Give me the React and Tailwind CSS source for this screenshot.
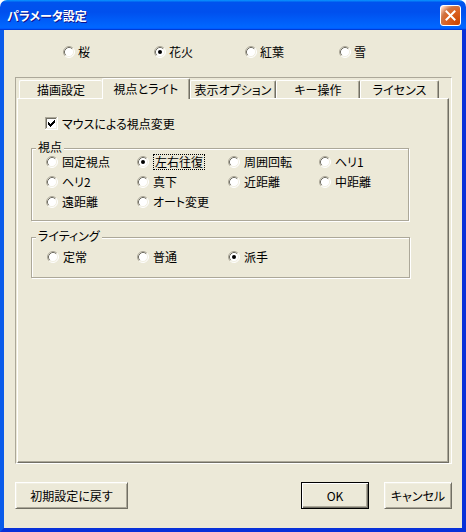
import React from "react";

function Radio({ checked }) {
  return (
    <svg width="12" height="12" viewBox="0 0 12 12" className="shrink-0 block">
      <circle cx="6" cy="6" r="5" fill="#fff" />
      <path d="M2.11 9.89 A5.5 5.5 0 0 1 9.89 2.11" fill="none" stroke="#aca899" />
      <path d="M9.89 2.11 A5.5 5.5 0 0 1 2.11 9.89" fill="none" stroke="#ffffff" />
      <path d="M2.82 9.18 A4.5 4.5 0 0 1 9.18 2.82" fill="none" stroke="#716f64" />
      <path d="M9.18 2.82 A4.5 4.5 0 0 1 2.82 9.18" fill="none" stroke="#f1efe2" />
      {checked && <circle cx="6" cy="6" r="2" fill="#000" />}
    </svg>
  );
}

function CheckBox() {
  return (
    <svg width="13" height="13" viewBox="0 0 13 13" className="shrink-0 block" shapeRendering="crispEdges">
      <rect x="0" y="0" width="13" height="13" fill="#ffffff" />
      <rect x="0" y="0" width="12" height="12" fill="#aca899" />
      <rect x="1" y="1" width="11" height="11" fill="#f1efe2" />
      <rect x="1" y="1" width="10" height="10" fill="#716f64" />
      <rect x="2" y="2" width="9" height="9" fill="#ffffff" />
      <rect x="3" y="5" width="1" height="3" fill="#000" />
      <rect x="4" y="6" width="1" height="3" fill="#000" />
      <rect x="5" y="7" width="1" height="3" fill="#000" />
      <rect x="6" y="6" width="1" height="3" fill="#000" />
      <rect x="7" y="5" width="1" height="3" fill="#000" />
      <rect x="8" y="4" width="1" height="3" fill="#000" />
      <rect x="9" y="3" width="1" height="3" fill="#000" />
    </svg>
  );
}

function RadioItem({ label, checked, gap = "gap-[4px]", focus = false }) {
  return (
    <div className={`flex items-center h-[20px] ${gap}`}>
      <Radio checked={checked} />
      {focus ? (
        <span className="border border-dotted border-black px-[1px] leading-[14px]">{label}</span>
      ) : (
        <span className="leading-[14px]">{label}</span>
      )}
    </div>
  );
}

function Tab({ label, width, selected = false, noRight = false }) {
  if (selected) {
    return (
      <div
        className={`${width} h-[21px] mb-[-1px] relative z-10 bg-[#ece9d8] border-t border-l border-white border-r border-r-[#716f64] shadow-[inset_-1px_0_0_#aca899] rounded-tl-[2px] rounded-tr-[2px] flex items-start justify-center pt-[3px]`}
      >
        <span className="leading-[14px]">{label}</span>
      </div>
    );
  }
  return (
    <div
      className={`${width} h-[18px] bg-[#ece9d8] border-t border-l border-white rounded-tl-[2px] rounded-tr-[2px] flex items-center justify-center ${
        noRight ? "" : "border-r border-r-[#716f64] shadow-[inset_-1px_0_0_#aca899]"
      }`}
    >
      <span className="leading-[14px]">{label}</span>
    </div>
  );
}

function Group({ label, className, children }) {
  return (
    <div
      className={`relative border border-[#aca899] shadow-[inset_1px_1px_0_#ffffff,1px_1px_0_#ffffff] ${className}`}
    >
      <span className="absolute left-[4px] top-[-9px] px-[2px] bg-[#ece9d8] leading-[14px]">{label}</span>
      {children}
    </div>
  );
}

function Button({ label, width, isDefault = false }) {
  return (
    <div
      className={`${width} h-[27px] flex items-center justify-center bg-[#ece9d8] ${
        isDefault
          ? "border border-black shadow-[inset_1px_1px_0_#ffffff,inset_-1px_-1px_0_#716f64,inset_-2px_-2px_0_#aca899]"
          : "border border-t-white border-l-white border-r-[#716f64] border-b-[#716f64] shadow-[inset_1px_1px_0_#f1efe2,inset_-1px_-1px_0_#aca899]"
      }`}
    >
      <span className="leading-[14px]">{label}</span>
    </div>
  );
}

export default function App() {
  return (
    <div className="w-[466px] h-[532px] bg-white font-['Noto_Sans_CJK_JP',sans-serif] [font-feature-settings:'palt'] text-[12px] leading-none text-black">
      <div className="w-full h-full flex flex-col rounded-t-[7px] overflow-hidden">
        {/* Title bar */}
        <div className="h-[30px] shrink-0 flex items-center pl-[7px] pr-[5px] bg-[linear-gradient(180deg,#0997ff,#0053ee_8%,#0050ee_40%,#0066ff_88%,#0066ff_93%,#005bff_95%,#003dd7_96%,#003dd7)]">
          <span className="text-white font-bold text-[12px] leading-[14px] mt-[2px] [text-shadow:1px_1px_#0f1089]">
            パラメータ設定
          </span>
          <div className="ml-auto mt-[1px] w-[21px] h-[21px] rounded-[3px] border border-white flex items-center justify-center bg-[radial-gradient(circle_at_90%_90%,#cc4600_0,#dc6527_55%,#cd7546_70%,#ffccb2_90%,#ffffff_100%)]">
            <svg width="11" height="11" viewBox="0 0 11 11">
              <path d="M1.5 1.5 L9.5 9.5 M9.5 1.5 L1.5 9.5" stroke="#fff" strokeWidth="2" strokeLinecap="square" />
            </svg>
          </div>
        </div>

        {/* Body with frame */}
        <div className="flex-1 flex flex-col border-l-4 border-r-4 border-b-4 border-l-[#0a5bea] border-r-[#0831d9] border-b-[#0831d9]">
          <div className="flex-1 bg-[#ece9d8] flex flex-col">
            {/* Top radios */}
            <div className="mt-[14px] h-[16px] flex items-center pl-[59px]">
              <div className="w-[91px]"><RadioItem label="桜" gap="gap-[3px]" /></div>
              <div className="w-[91px]"><RadioItem label="花火" checked gap="gap-[3px]" /></div>
              <div className="w-[94px]"><RadioItem label="紅葉" gap="gap-[3px]" /></div>
              <div><RadioItem label="雪" gap="gap-[3px]" /></div>
            </div>

            {/* Tab control frame */}
            <div className="ml-[11px] mt-[17px] w-[437px] h-[387px] border border-t-[#aca899] border-l-[#aca899] border-r-white border-b-white flex flex-col pl-[1px] pr-[2px]">
              <div className="h-[20px] flex items-end pl-[2px] shrink-0">
                <Tab label="描画設定" width="w-[83px]" noRight />
                <Tab label="視点とライト" width="w-[88px]" selected />
                <Tab label="表示オプション" width="w-[86px]" />
                <Tab label="キー操作" width="w-[84px]" />
                <Tab label="ライセンス" width="w-[79px]" />
              </div>
              <div className="flex-1 flex flex-col border border-t-white border-l-white border-r-[#716f64] border-b-[#716f64] shadow-[inset_-1px_-1px_0_#aca899]">
                <div className="mt-[18px] ml-[27px] h-[13px] flex items-center gap-[4px]">
                  <CheckBox />
                  <span className="leading-[14px]">マウスによる視点変更</span>
                </div>

                <Group label="視点" className="mt-[18px] ml-[13px] w-[378px] h-[73px]">
                  <div className="pt-[3px] pl-[14px] grid grid-cols-[91px_91px_91px_91px]">
                    <RadioItem label="固定視点" />
                    <RadioItem label="左右往復" checked focus />
                    <RadioItem label="周囲回転" />
                    <RadioItem label="ヘリ1" />
                    <RadioItem label="ヘリ2" />
                    <RadioItem label="真下" />
                    <RadioItem label="近距離" />
                    <RadioItem label="中距離" />
                    <RadioItem label="遠距離" />
                    <RadioItem label="オート変更" />
                  </div>
                </Group>

                <Group label="ライティング" className="mt-[16px] ml-[13px] w-[379px] h-[41px]">
                  <div className="pt-[9px] pl-[15px] grid grid-cols-[90px_91px_91px]">
                    <RadioItem label="定常" />
                    <RadioItem label="普通" />
                    <RadioItem label="派手" checked />
                  </div>
                </Group>
              </div>
            </div>

            {/* Buttons */}
            <div className="mt-[18px] flex pl-[11px] pr-[10px]">
              <Button label="初期設定に戻す" width="w-[113px]" />
              <div className="ml-auto flex gap-[15px]">
                <Button label="OK" width="w-[68px]" isDefault />
                <Button label="キャンセル" width="w-[68px]" />
              </div>
            </div>
          </div>
        </div>
      </div>
    </div>
  );
}
